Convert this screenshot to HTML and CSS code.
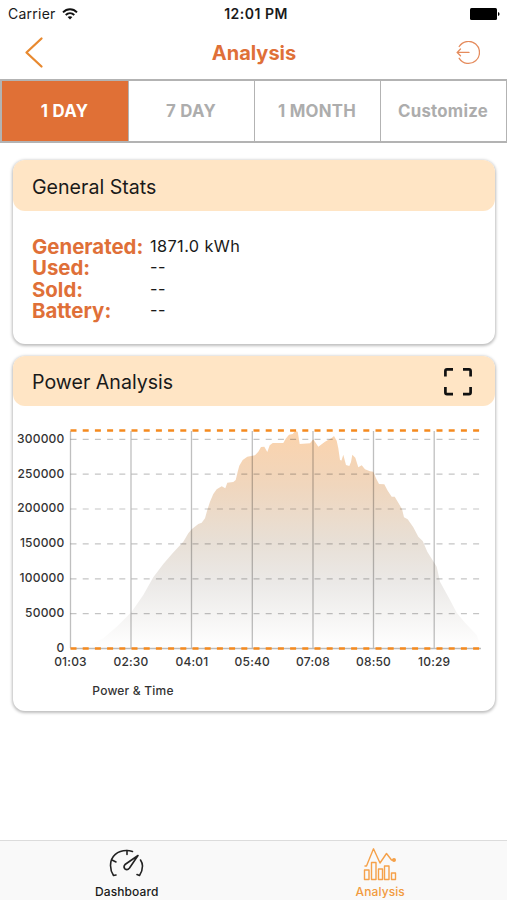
FILE: index.html
```html
<!DOCTYPE html>
<html lang="en">
<head>
<meta charset="UTF-8">
<meta name="viewport" content="width=device-width, initial-scale=1.0">
<title>Analysis</title>
<link rel="stylesheet" href="styles.css">
</head>
<body>

<div class="status-bar">
  <div class="carrier">
    <span>Carrier</span>
    <svg width="16" height="12" viewBox="0 0 16 12" fill="none" stroke="#111" stroke-width="1.9">
      <path d="M1 4.3 C5 0.2 11 0.2 15 4.3" />
      <path d="M3.7 7 C6.2 4.6 9.8 4.6 12.3 7" />
      <path d="M8 11.6 L5.6 9.1 C7 7.8 9 7.8 10.4 9.1 Z" fill="#111" stroke="none" />
    </svg>
  </div>
  <span class="clock">12:01 PM</span>
  <svg class="battery" width="30" height="12" viewBox="0 0 30 12">
    <rect x="0" y="0" width="27" height="12" rx="1.5" />
    <path d="M28 4 Q29.6 4.3 29.6 6 Q29.6 7.7 28 8 Z" />
  </svg>
</div>

<div class="nav-bar">
  <svg class="back" width="20" height="34" viewBox="0 0 20 34" fill="none" stroke="#e8892f" stroke-width="2.3" stroke-linecap="round" stroke-linejoin="round">
    <path d="M17.500 2.500 L2.500 16.500 L17.500 30.500" />
  </svg>
  <h1>Analysis</h1>
  <svg class="logout" width="24" height="24" viewBox="0 0 24 24" fill="none" stroke="#e58b5c" stroke-width="1.3" stroke-linecap="round">
    <path d="M3.200 5.500 A11 11 0 1 1 3.200 17.300" />
    <path d="M1.200 11.400 H13 M4.500 8 L1.200 11.400 L4.500 14.800" />
  </svg>
</div>

<div class="tabs">
  <div class="tab active">1 DAY</div>
  <div class="tab">7 DAY</div>
  <div class="tab">1 MONTH</div>
  <div class="tab">Customize</div>
</div>

<main>
  <section class="card stats-card">
    <div class="card-header"><h2>General Stats</h2></div>
    <dl class="stats">
      <dt>Generated:</dt><dd>1871.0 kWh</dd>
      <dt>Used:</dt><dd>--</dd>
      <dt>Sold:</dt><dd>--</dd>
      <dt>Battery:</dt><dd>--</dd>
    </dl>
  </section>

  <section class="card chart-card">
    <div class="card-header">
      <h2>Power Analysis</h2>
      <svg width="28" height="28" viewBox="0 0 28 28" fill="none" stroke="#111" stroke-width="2.7">
        <path d="M1.400 8.500 V3 Q1.400 1.400 3 1.400 H9" />
        <path d="M19 1.400 H25 Q26.600 1.400 26.600 3 V8.500" />
        <path d="M26.600 19 V24.500 Q26.600 26.200 25 26.200 H19" />
        <path d="M9 26.200 H3 Q1.400 26.200 1.400 24.500 V19" />
      </svg>
    </div>
    <svg class="chart" width="481" height="304" viewBox="14 406 481 304">
      <defs>
        <linearGradient id="fade" gradientUnits="userSpaceOnUse" x1="0" y1="431" x2="0" y2="648">
          <stop offset="0" stop-color="#fbd3ac" />
          <stop offset="0.25" stop-color="#f0d6bd" />
          <stop offset="0.5" stop-color="#e8dfd5" />
          <stop offset="0.7" stop-color="#ebe9e7" />
          <stop offset="1" stop-color="#ffffff" />
        </linearGradient>
      </defs>

      <!-- Power curve -->
      <path fill="url(#fade)" d="M85,648 L103.300,638.300 L116.700,626.700 L131.700,611.700 L143.300,595 L153.300,577.300 L163.300,564 L173,552.700 L183.300,541.700
        L188.300,533.300 L191.700,529.300 L198.300,524 L201.700,522.700 L205,518.300 L207.300,510 L210,501.700 L213.300,494 L216.700,489.300 L221.700,486.300
        L225.300,488.300 L227.300,482.700 L233.300,482 L235.700,480 L237.700,471.700 L239.300,465.700 L242.700,460 L247.300,456.700 L255,455.300 L258.300,451.700
        L261,447 L264.300,446.700 L267.300,452 L269.700,445.300 L272.700,443 L283.300,443 L285.700,438.700 L289,434.700 L292.700,434 L295.300,431 L297.700,431.700
        L299.700,444 L310,443.300 L313.300,439.300 L318.300,446.700 L325,441.700 L331.700,438 L334,436 L336.700,440.700 L338.300,448.300 L340,460 L341.500,460.500
        L343.300,454.700 L346,465 L349.300,466 L351,462 L352.300,454.700 L355.300,457.700 L358.300,467.300 L361.700,465.300 L365,469.300 L370,471.300 L373.300,471.700
        L376,478.300 L379,484 L384.300,484.300 L387.700,490.700 L391.700,496.700 L394.700,496.700 L398.300,502.700 L402,509 L404,517.300 L407.700,519.300
        L413.300,527.300 L418.300,536.700 L422.700,541 L427.300,551.700 L436.700,566.700 L440,581.700 L450,600 L456.700,612.700 L465,622.700 L476.700,635 L481,648 Z" />

      <!-- Grid -->
      <path class="grid-v" d="M70.500,431 V648 M131,431 V648 M191.500,431 V648 M252.300,431 V648 M313,431 V648 M373.500,431 V648 M434.200,431 V648" />
      <g class="grid-h">
        <path d="M70.500,439.300 H481" />
        <path d="M70.500,474.200 H481" />
        <path d="M70.500,509 H481" />
        <path d="M70.500,543.900 H481" />
        <path d="M70.500,578.800 H481" />
        <path d="M70.500,613.700 H481" />
      </g>
      <path class="axis" d="M70.500,648.500 H481" />
      <path class="limit" d="M70.500,430.500 H481" />
      <path class="limit" d="M70.500,648.500 H481" />

      <g class="labels y-labels">
        <text x="64.500" y="442.500">300000</text>
        <text x="64.500" y="477.500">250000</text>
        <text x="64.500" y="512.300">200000</text>
        <text x="64.500" y="547.200">150000</text>
        <text x="64.500" y="582">100000</text>
        <text x="64.500" y="617">50000</text>
        <text x="64.500" y="651.700">0</text>
      </g>
      <g class="labels x-labels">
        <text x="70.500" y="665.500">01:03</text>
        <text x="131" y="665.500">02:30</text>
        <text x="192" y="665.500">04:01</text>
        <text x="252.300" y="665.500">05:40</text>
        <text x="313" y="665.500">07:08</text>
        <text x="373.500" y="665.500">08:50</text>
        <text x="434.200" y="665.500">10:29</text>
        <text x="133" y="694.500">Power &amp; Time</text>
      </g>
    </svg>
  </section>
</main>

<nav class="bottom-bar">
  <div class="bottom-item">
    <svg width="36" height="32" viewBox="0 0 36 32" fill="none" stroke="#222" stroke-width="1.6" stroke-linecap="round" stroke-linejoin="round">
      <path d="M7 28 L4.500 28.500 Q1.500 24 1.500 18.500 C1.500 9 9 3.500 17.500 3.500 Q20.500 3.500 23.500 4.500" />
      <path d="M31.500 13 Q33.500 16 33.500 19 Q33.500 24 30.500 28.500 L28 27.500" />
      <path d="M18 3.500 V7.500 M3 13 L7 15" />
      <path d="M29 8.500 L20.500 21 Q18.500 23.500 16 22 Q14 20 16 17.500 Z" />
    </svg>
    <span>Dashboard</span>
  </div>
  <div class="bottom-item selected">
    <svg width="34" height="34" viewBox="0 0 34 34" fill="none" stroke="#f5a14a" stroke-width="1.4" stroke-linejoin="round">
      <path d="M1.500 19 H3.500 L10.500 1.800 L17 16 L23.500 6.500 L28.500 13 H30" />
      <circle cx="31" cy="13" r="1.300" fill="#f5a14a" />
      <path d="M1.500 32.500 V23 H6 V32.500 Z M8.500 32.500 V15.500 H13 V32.500 Z M15.500 32.500 V22 H19.500 V32.500 Z M21.500 32.500 V19 H26 V32.500 Z M28.500 32.500 V26 H32.500 V32.500 Z" />
    </svg>
    <span>Analysis</span>
  </div>
</nav>

</body>
</html>
```
FILE: styles.css
```css
* {
  box-sizing: border-box;
}

body {
  margin: 0;
  height: 900px;
  display: flex;
  flex-direction: column;
  background: #fff;
  color: #1a1a1a;
  font-family: Inter, "Liberation Sans", sans-serif;
  overflow: hidden;
}

h1, h2, dl, dd {
  margin: 0;
}

svg {
  display: block;
}

/* Top of the screen */
.status-bar {
  height: 27px;
  padding: 0 7px 0 8px;
  display: grid;
  grid-template-columns: 1fr auto 1fr;
  align-items: center;
  font-size: 14px;
}

.carrier {
  display: flex;
  align-items: center;
  gap: 6px;
  letter-spacing: 0.25px;
}

.clock {
  padding-left: 4px;
  font-size: 14px;
  font-weight: 600;
  letter-spacing: 0.5px;
}

.battery {
  justify-self: end;
}

.nav-bar {
  height: 52px;
  padding: 0 27px 0 24px;
  display: grid;
  grid-template-columns: 1fr auto 1fr;
  align-items: center;
}

.nav-bar h1 {
  padding-left: 4px;
  color: #df7038;
  font-size: 20px;
  font-weight: 700;
}

.logout {
  justify-self: end;
}

/* Period tabs */
.tabs {
  height: 64px;
  display: grid;
  grid-template-columns: 126px 126px 126px 1fr;
  border: 2px solid #b3b3b3;
  border-width: 2px 1px 2px 2px;
}

.tab {
  display: flex;
  align-items: center;
  justify-content: center;
  padding-right: 1px;
  border-left: 1px solid #b3b3b3;
  color: #adadad;
  font-size: 16.8px;
  font-weight: 700;
  letter-spacing: 0.25px;
}

.tab.active {
  border-left: 0;
  background: #e07036;
  color: #fff;
}

/* Cards */
main {
  flex: 1;
  padding: 17px 12px 0 13px;
}

.card {
  border-radius: 12px;
  background: #fff;
  box-shadow: 0 1px 3px 1px rgba(0, 0, 0, 0.26);
}

.stats-card {
  height: 184px;
}

.chart-card {
  height: 355px;
  margin-top: 12px;
}

.card-header {
  height: 50px;
  padding: 2px 23px 0 19px;
  display: flex;
  align-items: center;
  justify-content: space-between;
  border-radius: 12px;
  background: #ffe5c5;
}

.stats-card .card-header {
  height: 51px;
  padding-top: 3px;
}

.card-header h2 {
  font-size: 19.6px;
  font-weight: 400;
}

.stats {
  display: grid;
  grid-template-columns: 118px 1fr;
  grid-auto-rows: 21.3px;
  align-items: center;
  padding: 25px 0 0 19px;
  line-height: 21px;
}

.stats dt {
  color: #df7038;
  font-size: 20.4px;
  font-weight: 700;
}

.stats dd {
  font-size: 16.3px;
  letter-spacing: 0.4px;
}

/* Chart */
.chart {
  margin-left: 1px;
}

.grid-v {
  stroke: #000;
  stroke-opacity: 0.25;
  stroke-width: 1.3;
}

.grid-h {
  stroke: #000;
  stroke-opacity: 0.23;
  stroke-width: 1.2;
  stroke-dasharray: 6 6.2;
}

.axis {
  stroke: #bbb;
  stroke-width: 1.3;
}

.limit {
  stroke: #f58a1f;
  stroke-width: 2.4;
  stroke-dasharray: 6 6.2;
}

.labels {
  fill: #333;
  font-size: 12px;
  letter-spacing: 0.2px;
  font-weight: 500;
}

.y-labels {
  text-anchor: end;
}

.x-labels {
  text-anchor: middle;
}

/* Bottom navigation */
.bottom-bar {
  height: 60px;
  display: grid;
  grid-template-columns: 1fr 1fr;
  border-top: 1px solid #dcdcdc;
  background: #f9f9f9;
  font-size: 12px;
  font-weight: 500;
  letter-spacing: 0.1px;
}

.bottom-item {
  padding-top: 6px;
  display: flex;
  flex-direction: column;
  align-items: center;
  justify-content: space-between;
  height: 58px;
}

.selected {
  color: #f29b3f;
}
```
